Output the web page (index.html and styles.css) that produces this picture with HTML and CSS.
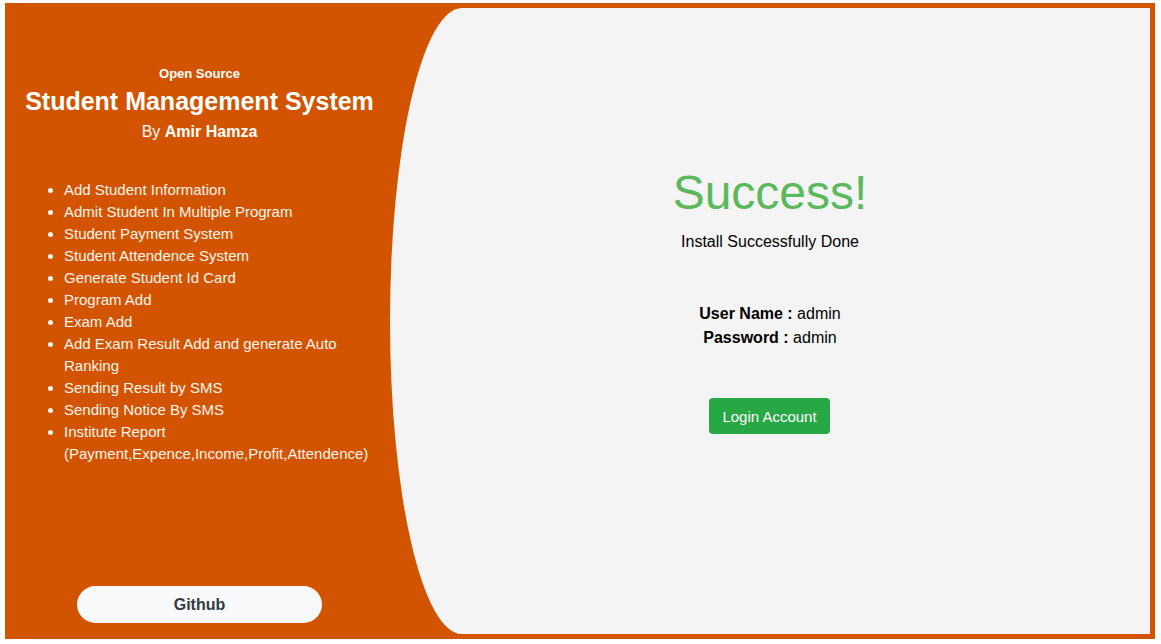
FILE: index.html
```html
<!DOCTYPE html>
<html>
<head>
<meta charset="utf-8">
<title>Student Management System</title>
<link rel="stylesheet" href="styles.css">
</head>
<body>
<div class="frame">
  <aside class="intro">
    <div class="kicker">Open Source</div>
    <h1 class="title">Student Management System</h1>
    <div class="author">By <b>Amir Hamza</b></div>
    <ul class="features">
      <li>Add Student Information</li>
      <li>Admit Student In Multiple Program</li>
      <li>Student Payment System</li>
      <li>Student Attendence System</li>
      <li>Generate Student Id Card</li>
      <li>Program Add</li>
      <li>Exam Add</li>
      <li>Add Exam Result Add and generate Auto Ranking</li>
      <li>Sending Result by SMS</li>
      <li>Sending Notice By SMS</li>
      <li>Institute Report (Payment,Expence,Income,Profit,Attendence)</li>
    </ul>
    <a class="github" href="#">Github</a>
  </aside>
  <main class="panel">
    <h2 class="success">Success!</h2>
    <p class="done">Install Successfully Done</p>
    <div class="creds">
      <div><b>User Name :</b> admin</div>
      <div><b>Password :</b> admin</div>
    </div>
    <a class="login" href="#">Login Account</a>
  </main>
</div>
</body>
</html>
```
FILE: styles.css
```css
html, body {
  margin: 0;
  padding: 0;
  background: #ffffff;
}
body {
  padding: 3px 6px 5px 5px;
  font-family: "Liberation Sans", Arial, sans-serif;
  color: #000;
}
.frame {
  height: 636px;
  box-sizing: border-box;
  background: #d35400;
  padding: 5px 5px 5px 0;
  display: grid;
  grid-template-columns: 385px 1fr;
}
.intro {
  display: flex;
  flex-direction: column;
  align-items: center;
  color: #ffffff;
  padding-top: 58px;
  padding-bottom: 11px;
}
.kicker {
  font-size: 13px;
  font-weight: bold;
  line-height: 16px;
  margin-left: 4px;
}
.title {
  font-size: 25px;
  font-weight: bold;
  line-height: 30px;
  margin: 4px 0 0 4px;
}
.author {
  font-size: 16px;
  line-height: 24px;
  margin: 4px 0 0 4px;
}
.features {
  align-self: stretch;
  margin: 35px 16px 0 20px;
  padding-left: 39px;
  font-size: 15px;
  line-height: 22px;
  color: #fdf4ee;
}
.github {
  margin-top: auto;
  width: 245px;
  height: 37px;
  margin-left: 4px;
  display: flex;
  align-items: center;
  justify-content: center;
  background: #f8f9fa;
  color: #343a40;
  font-weight: bold;
  font-size: 16px;
  text-decoration: none;
  border-radius: 19px;
}
.panel {
  background: #f4f4f4;
  border-radius: 72px 0 0 72px / 50% 0 0 50%;
  display: flex;
  flex-direction: column;
  align-items: center;
  padding-top: 156px;
  text-align: center;
}
.success {
  margin: 0;
  font-size: 48px;
  font-weight: normal;
  line-height: 58px;
  color: #5cb85c;
}
.done {
  margin: 8px 0 0;
  font-size: 16px;
  line-height: 24px;
}
.creds {
  margin-top: 48px;
  font-size: 16px;
  line-height: 24px;
}
.login {
  margin-top: 48px;
  margin-right: 1px;
  height: 36px;
  padding: 0 13px;
  box-sizing: border-box;
  display: flex;
  align-items: center;
  background: #28a745;
  color: #ffffff;
  font-size: 15px;
  text-decoration: none;
  border-radius: 4px;
}
```
